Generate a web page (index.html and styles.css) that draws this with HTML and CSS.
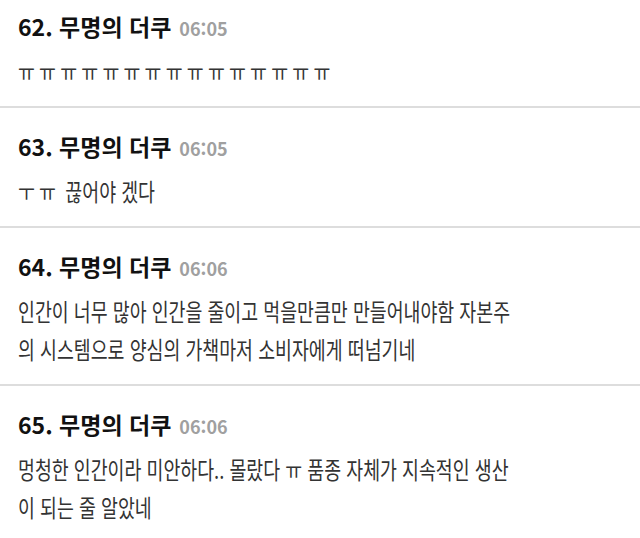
FILE: index.html
```html
<!DOCTYPE html>
<html lang="ko">
<head>
<meta charset="utf-8">
<link rel="stylesheet" href="styles.css">
</head>
<body>
<div class="page">
  <div class="comment first">
    <div class="head"><span class="name">62. 무명의 더쿠</span><span class="time">06:05</span></div>
    <div class="text"><span class="jamo">ㅠㅠㅠㅠㅠㅠㅠㅠㅠㅠㅠㅠㅠㅠㅠ</span></div>
  </div>
  <div class="comment">
    <div class="head"><span class="name">63. 무명의 더쿠</span><span class="time">06:05</span></div>
    <div class="text"><span class="jamo">ㅜㅠ</span> 끊어야 겠다</div>
  </div>
  <div class="comment">
    <div class="head"><span class="name">64. 무명의 더쿠</span><span class="time">06:06</span></div>
    <div class="text">인간이 너무 많아 인간을 줄이고 먹을만큼만 만들어내야함 자본주의 시스템으로 양심의 가책마저 소비자에게 떠넘기네</div>
  </div>
  <div class="comment">
    <div class="head"><span class="name">65. 무명의 더쿠</span><span class="time">06:06</span></div>
    <div class="text">멍청한 인간이라 미안하다.. 몰랐다 ㅠ 품종 자체가 지속적인 생산이 되는 줄 알았네</div>
  </div>
</div>
</body>
</html>
```
FILE: styles.css
```css
html, body {
  margin: 0;
  padding: 0;
  background: #ffffff;
}
.page {
  width: 640px;
  font-family: "Noto Sans CJK KR", "Noto Sans", sans-serif;
}
.comment {
  padding: 19px 18px 16px;
  border-top: 2px solid #dddddd;
  overflow: hidden;
}
.comment.first {
  border-top: none;
  padding-top: 7px;
}
.head {
  display: flex;
  align-items: baseline;
  gap: 8px;
  height: 38px;
  line-height: 38px;
  margin-bottom: 7px;
  white-space: nowrap;
}
.name {
  font-size: 23px;
  font-weight: 700;
  color: #111111;
}
.time {
  font-size: 18px;
  font-weight: 700;
  color: #a0a0a0;
}
.text {
  width: 655px;
  font-size: 24px;
  line-height: 38px;
  color: #333333;
  word-break: break-all;
  transform: scaleX(0.765);
  transform-origin: 0 0;
}
.jamo {
  letter-spacing: 5.5px;
}
```
